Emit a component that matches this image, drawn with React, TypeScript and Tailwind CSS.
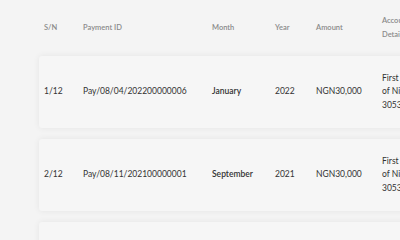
import React from 'react';

type Payment = {
    sn: string;
    id: string;
    month: string;
    year: string;
    amount: string;
    bank: string[];
};

const payments: Payment[] = [
    { sn: '1/12', id: 'Pay/08/04/202200000006', month: 'January', year: '2022', amount: 'NGN30,000', bank: ['First Bank', 'of Nigeria', '3053012345'] },
    { sn: '2/12', id: 'Pay/08/11/202100000001', month: 'September', year: '2021', amount: 'NGN30,000', bank: ['First Bank', 'of Nigeria', '3053012345'] },
    { sn: '3/12', id: 'Pay/08/12/202100000002', month: 'October', year: '2021', amount: 'NGN30,000', bank: ['First Bank', 'of Nigeria', '3053012345'] },
];

const cols = ['w-[39px]', 'w-[129px]', 'w-[63px]', 'w-[41px]', 'w-[66px]', 'w-[80px]'];

export default function App() {
    return (
        <div className="w-[400px] h-[240px] overflow-hidden bg-[#f4f4f4] font-['Lato',sans-serif]">
            <div className="pl-[39px] w-[520px]">
                <div className="flex items-center h-[56px] pl-[5px] text-[7.5px] font-semibold text-[#8a8a8a] leading-[14px]">
                    <div className={cols[0]}>S/N</div>
                    <div className={cols[1]}>Payment ID</div>
                    <div className={cols[2]}>Month</div>
                    <div className={cols[3]}>Year</div>
                    <div className={cols[4]}>Amount</div>
                    <div className={cols[5] + ' w-[30px]'}>Account<br />Details</div>
                </div>
                <div className="flex flex-col gap-[11px]">
                    {payments.map(p => (
                        <div key={p.sn} className="flex items-center h-[72px] pl-[5px] bg-[#f6f6f6] rounded-[3px] shadow-[0_0_6px_rgba(0,0,0,0.07)] text-[8.5px] text-[#333] leading-[13.5px]">
                            <div className={cols[0]}>{p.sn}</div>
                            <div className={cols[1]}>{p.id}</div>
                            <div className={cols[2] + ' font-semibold'}>{p.month}</div>
                            <div className={cols[3]}>{p.year}</div>
                            <div className={cols[4]}>{p.amount}</div>
                            <div className={cols[5]}>
                                {p.bank.map(l => <div key={l}>{l}</div>)}
                            </div>
                        </div>
                    ))}
                </div>
            </div>
        </div>
    );
}
